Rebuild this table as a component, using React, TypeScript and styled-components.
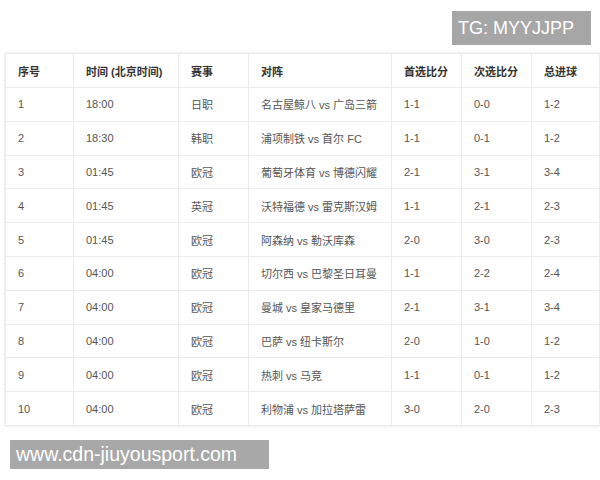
import styled, { createGlobalStyle } from "styled-components";

const GlobalStyle = createGlobalStyle`
  html, body {
    margin: 0;
    padding: 0;
    background: #ffffff;
  }
  body {
    font-family: "Liberation Sans", "Noto Sans CJK SC", sans-serif;
  }
`;

const Page = styled.div`
  width: 600px;
  height: 480px;
  display: flex;
  flex-direction: column;
  overflow: hidden;
`;

const TopBar = styled.div`
  display: flex;
  justify-content: flex-end;
  padding: 11px 9px 0 0;
`;

const Tag = styled.div`
  height: 34px;
  width: 139px;
  box-sizing: border-box;
  padding-left: 6px;
  display: flex;
  align-items: center;
  background: #a6a6a6;
  color: #ffffff;
  font-family: "Liberation Sans", sans-serif;
  font-size: 18px;
`;

const TableWrap = styled.div`
  margin: 8px 1px 0 5px;
  box-shadow: 0 0 3px rgba(0, 0, 0, 0.12);
`;

const Table = styled.table`
  width: 594px;
  border-collapse: collapse;
  table-layout: fixed;
`;

const HeadCell = styled.th<{ $w: number }>`
  width: ${(p) => p.$w}px;
  height: 34px;
  padding: 0 0 0 12px;
  text-align: left;
  font-size: 11px;
  font-weight: bold;
  color: #333333;
  border: 1px solid #ebebeb;
  box-sizing: border-box;
`;

const Cell = styled.td`
  height: 33.8px;
  padding: 0 0 0 12px;
  font-size: 11px;
  color: #555555;
  border: 1px solid #ebebeb;
  box-sizing: border-box;
  white-space: nowrap;
`;

const Watermark = styled.div`
  margin: 14px 0 0 10px;
  width: 259px;
  height: 29px;
  box-sizing: border-box;
  padding-left: 6px;
  display: flex;
  align-items: center;
  background: #a8a8a8;
  color: #ffffff;
  font-family: "Liberation Sans", sans-serif;
  font-size: 19.5px;
`;

const columns = [
  { title: "序号", w: 68 },
  { title: "时间 (北京时间)", w: 105 },
  { title: "赛事", w: 70 },
  { title: "对阵", w: 143 },
  { title: "首选比分", w: 70 },
  { title: "次选比分", w: 70 },
  { title: "总进球", w: 68 },
];

const rows = [
  ["1", "18:00", "日职", "名古屋鲸八 vs 广岛三箭", "1-1", "0-0", "1-2"],
  ["2", "18:30", "韩职", "浦项制铁 vs 首尔 FC", "1-1", "0-1", "1-2"],
  ["3", "01:45", "欧冠", "葡萄牙体育 vs 博德闪耀", "2-1", "3-1", "3-4"],
  ["4", "01:45", "英冠", "沃特福德 vs 雷克斯汉姆", "1-1", "2-1", "2-3"],
  ["5", "01:45", "欧冠", "阿森纳 vs 勒沃库森", "2-0", "3-0", "2-3"],
  ["6", "04:00", "欧冠", "切尔西 vs 巴黎圣日耳曼", "1-1", "2-2", "2-4"],
  ["7", "04:00", "欧冠", "曼城 vs 皇家马德里", "2-1", "3-1", "3-4"],
  ["8", "04:00", "欧冠", "巴萨 vs 纽卡斯尔", "2-0", "1-0", "1-2"],
  ["9", "04:00", "欧冠", "热刺 vs 马竞", "1-1", "0-1", "1-2"],
  ["10", "04:00", "欧冠", "利物浦 vs 加拉塔萨雷", "3-0", "2-0", "2-3"],
];

export default function App() {
  return (
    <Page>
      <GlobalStyle />
      <TopBar>
        <Tag>TG: MYYJJPP</Tag>
      </TopBar>
      <TableWrap>
        <Table>
          <thead>
            <tr>
              {columns.map((c) => (
                <HeadCell key={c.title} $w={c.w}>
                  {c.title}
                </HeadCell>
              ))}
            </tr>
          </thead>
          <tbody>
            {rows.map((r) => (
              <tr key={r[0]}>
                {r.map((v, i) => (
                  <Cell key={i}>{v}</Cell>
                ))}
              </tr>
            ))}
          </tbody>
        </Table>
      </TableWrap>
      <Watermark>www.cdn-jiuyousport.com</Watermark>
    </Page>
  );
}
